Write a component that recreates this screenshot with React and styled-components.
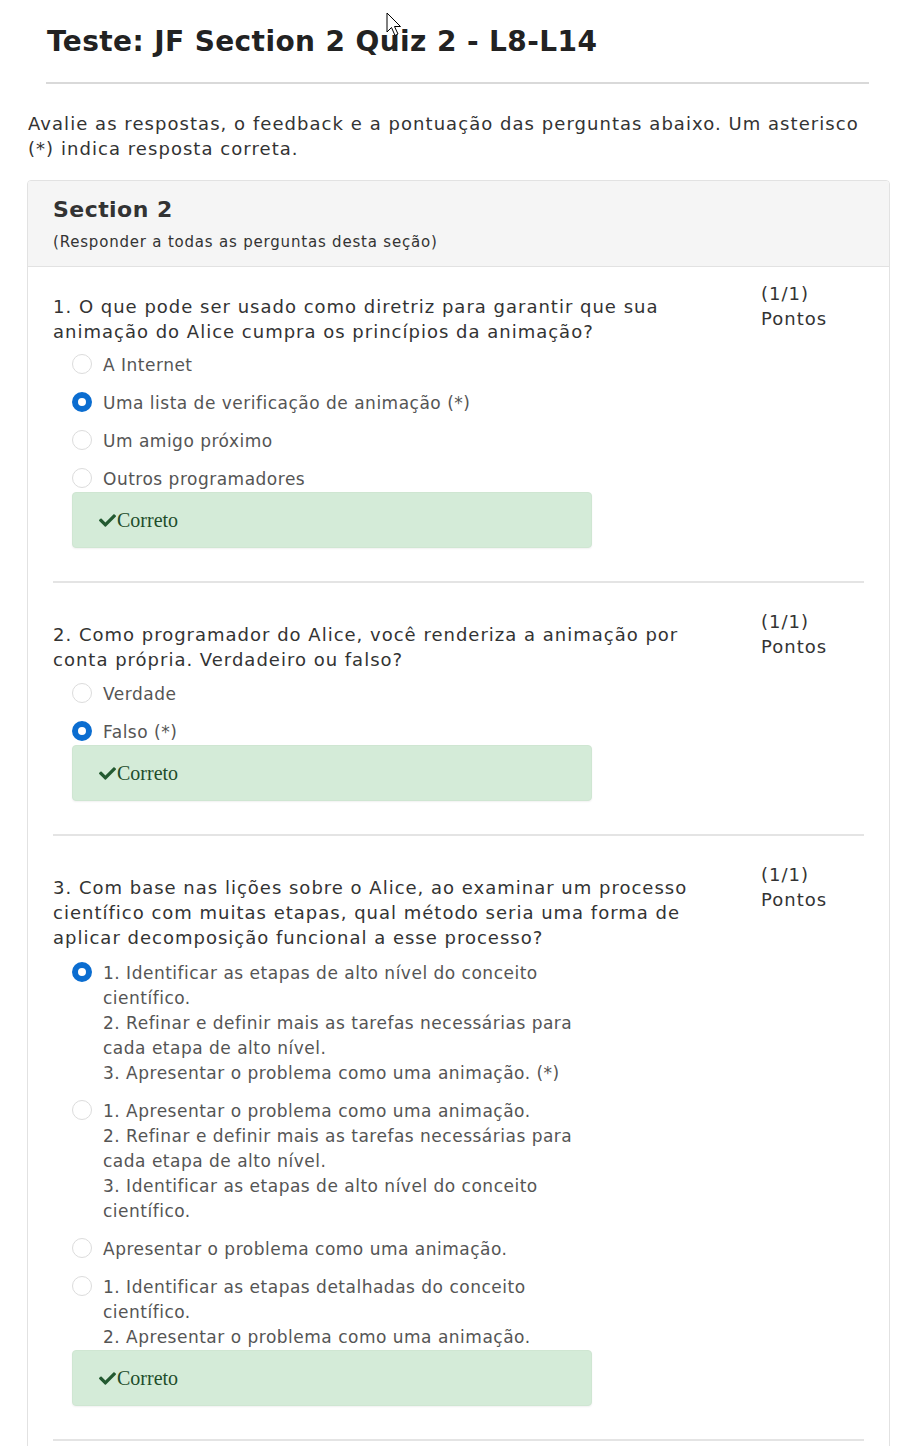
import React from "react";
import styled, { createGlobalStyle } from "styled-components";
import { FaCheck } from "react-icons/fa";

const Global = createGlobalStyle`
  html, body { margin: 0; padding: 0; background: #fff; }
  body { font-family: "DejaVu Sans", Verdana, sans-serif; color: #333; }
`;

const Page = styled.div`
  position: relative;
  padding: 0 29px 0 27px;
`;

const TitleBlock = styled.div`
  margin: 0 21px 0 19px;
  padding-top: 25px;
`;

const Title = styled.h1`
  margin: 0;
  font-size: 28px;
  line-height: 34px;
  font-weight: bold;
  letter-spacing: 0.4px;
  color: #222;
  padding-left: 1px;
`;

const Rule = styled.div`
  height: 2px;
  background: #d9d9d9;
  margin-top: 23px;
`;

const Intro = styled.p`
  margin: 27px 0 19px 1px;
  font-size: 18px;
  line-height: 25px;
  letter-spacing: 1.05px;
  color: #333;
`;

const Card = styled.section`
  border: 1px solid #e2e2e2;
  border-radius: 4px;
  overflow: hidden;
`;

const CardHeader = styled.header`
  background: #f5f5f5;
  border-bottom: 1px solid #e2e2e2;
  padding: 15px 25px 14px;
`;

const SectionTitle = styled.h2`
  margin: 0;
  font-size: 22px;
  line-height: 28px;
  font-weight: bold;
  letter-spacing: 0.45px;
  color: #333;
`;

const SectionNote = styled.div`
  margin-top: 8px;
  font-size: 15px;
  line-height: 20px;
  letter-spacing: 0.8px;
  color: #333;
`;

const CardBody = styled.div`
  padding: 14px 25px 40px;
`;

const Question = styled.div`
  padding-bottom: 33px;
  border-bottom: 2px solid #e4e4e4;
  & + & { padding-top: 26px; }
`;

const QuestionRow = styled.div`
  display: grid;
  grid-template-columns: 1fr 103px;
  column-gap: 46px;
`;

const QuestionText = styled.div`
  margin-top: 13px;
  font-size: 18px;
  line-height: 25px;
  letter-spacing: 1px;
  color: #333;
`;

const Points = styled.div`
  font-size: 18px;
  line-height: 25px;
  letter-spacing: 1px;
  color: #333;
`;

const Options = styled.div`
  width: 520px;
  margin-left: 19px;
  margin-top: ${(p) => p.$top}px;
  display: flex;
  flex-direction: column;
  gap: 13px;
`;

const Option = styled.div`
  display: flex;
  align-items: flex-start;
`;

const Radio = styled.span`
  flex: none;
  box-sizing: border-box;
  width: 20px;
  height: 20px;
  margin-top: 1px;
  border-radius: 50%;
  background: #fff;
  border: ${(p) => (p.$checked ? "6px solid #0b6dd0" : "1px solid #dcdcdc")};
`;

const OptionLabel = styled.span`
  margin-left: 11px;
  font-size: 17px;
  line-height: 25px;
  letter-spacing: 0.5px;
  color: #555;
`;

const Feedback = styled.div`
  width: 520px;
  height: 56px;
  margin-left: 19px;
  box-sizing: border-box;
  background: #d4ebd8;
  border: 1px solid #cfe6d2;
  border-radius: 4px;
  box-shadow: 0 1px 2px rgba(0, 0, 0, 0.06);
  display: flex;
  align-items: center;
  padding-left: 26px;
  font-family: "Liberation Serif", "Times New Roman", serif;
  font-size: 20px;
  color: #1e4d2b;
  svg { color: #235a31; margin-right: 1px; }
`;

const Cursor = styled.svg`
  position: absolute;
  left: 386px;
  top: 12px;
`;

const questions = [
  {
    text: "1. O que pode ser usado como diretriz para garantir que sua animação do Alice cumpra os princípios da animação?",
    top: 9,
    options: [
      { label: ["A Internet"] },
      { label: ["Uma lista de verificação de animação (*)"], checked: true },
      { label: ["Um amigo próximo"] },
      { label: ["Outros programadores"] },
    ],
  },
  {
    text: "2. Como programador do Alice, você renderiza a animação por conta própria. Verdadeiro ou falso?",
    top: 10,
    options: [{ label: ["Verdade"] }, { label: ["Falso (*)"], checked: true }],
  },
  {
    text: "3. Com base nas lições sobre o Alice, ao examinar um processo científico com muitas etapas, qual método seria uma forma de aplicar decomposição funcional a esse processo?",
    top: 11,
    options: [
      {
        label: [
          "1. Identificar as etapas de alto nível do conceito científico.",
          "2. Refinar e definir mais as tarefas necessárias para cada etapa de alto nível.",
          "3. Apresentar o problema como uma animação. (*)",
        ],
        checked: true,
      },
      {
        label: [
          "1. Apresentar o problema como uma animação.",
          "2. Refinar e definir mais as tarefas necessárias para cada etapa de alto nível.",
          "3. Identificar as etapas de alto nível do conceito científico.",
        ],
      },
      { label: ["Apresentar o problema como uma animação."] },
      {
        label: [
          "1. Identificar as etapas detalhadas do conceito científico.",
          "2. Apresentar o problema como uma animação.",
        ],
      },
    ],
  },
];

export default function App() {
  return (
    <>
      <Global />
      <Page>
        <TitleBlock>
          <Title>Teste: JF Section 2 Quiz 2 - L8-L14</Title>
          <Rule />
        </TitleBlock>
        <Intro>
          Avalie as respostas, o feedback e a pontuação das perguntas abaixo. Um asterisco (*) indica
          resposta correta.
        </Intro>
        <Card>
          <CardHeader>
            <SectionTitle>Section 2</SectionTitle>
            <SectionNote>(Responder a todas as perguntas desta seção)</SectionNote>
          </CardHeader>
          <CardBody>
            {questions.map((q, i) => (
              <Question key={i}>
                <QuestionRow>
                  <div>
                    <QuestionText>{q.text}</QuestionText>
                    <Options $top={q.top}>
                      {q.options.map((o, j) => (
                        <Option key={j}>
                          <Radio $checked={!!o.checked} />
                          <OptionLabel>
                            {o.label.map((l, k) => (
                              <React.Fragment key={k}>
                                {k > 0 && <br />}
                                {l}
                              </React.Fragment>
                            ))}
                          </OptionLabel>
                        </Option>
                      ))}
                    </Options>
                    <Feedback>
                      <FaCheck size={17} />
                      Correto
                    </Feedback>
                  </div>
                  <Points>
                    (1/1)
                    <br />
                    Pontos
                  </Points>
                </QuestionRow>
              </Question>
            ))}
          </CardBody>
        </Card>
        <Cursor width="18" height="26" viewBox="0 0 18 26">
          <path d="M1 1 L1 20 L5.5 15.5 L9 23.5 L12 22 L8.5 14.5 L14.5 14.5 Z" fill="#fff" stroke="#000" strokeWidth="1" strokeLinejoin="miter" />
        </Cursor>
      </Page>
    </>
  );
}
